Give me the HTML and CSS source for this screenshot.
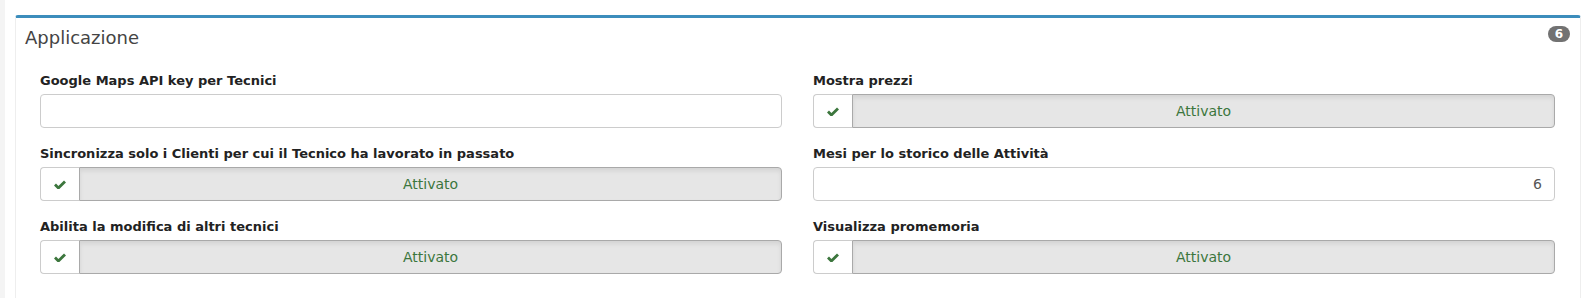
FILE: index.html
```html
<!DOCTYPE html>
<html lang="it">
<head>
    <meta charset="UTF-8">
    <meta name="viewport" content="width=device-width, initial-scale=1.0">
    <title>Impostazioni - Applicazione</title>
    <link rel="stylesheet" href="styles.css">
</head>
<body>

<!-- === Sezione impostazioni === -->
<div class="content-wrapper">
    <div class="box">
        <div class="box-header">
            <h3 class="box-title">Applicazione</h3>
            <span class="badge">6</span>
        </div>

        <div class="box-body">
            <div class="settings-grid">

                <div class="form-group">
                    <label for="mapsKey">Google Maps API key per Tecnici</label>
                    <input type="text" id="mapsKey" class="form-control">
                </div>

                <div class="form-group">
                    <label>Mostra prezzi</label>
                    <div class="toggle">
                        <span class="toggle-addon">
                            <svg class="check" viewBox="0 0 12 9" width="12" height="9"><path d="M1 4.6 L4.4 8 L11 1.4" fill="none" stroke="currentColor" stroke-width="2.8"/></svg>
                        </span>
                        <span class="toggle-state">Attivato</span>
                    </div>
                </div>

                <div class="form-group">
                    <label>Sincronizza solo i Clienti per cui il Tecnico ha lavorato in passato</label>
                    <div class="toggle">
                        <span class="toggle-addon">
                            <svg class="check" viewBox="0 0 12 9" width="12" height="9"><path d="M1 4.6 L4.4 8 L11 1.4" fill="none" stroke="currentColor" stroke-width="2.8"/></svg>
                        </span>
                        <span class="toggle-state">Attivato</span>
                    </div>
                </div>

                <div class="form-group">
                    <label for="mesiStorico">Mesi per lo storico delle Attività</label>
                    <input type="text" id="mesiStorico" class="form-control number" value="6">
                </div>

                <div class="form-group">
                    <label>Abilita la modifica di altri tecnici</label>
                    <div class="toggle">
                        <span class="toggle-addon">
                            <svg class="check" viewBox="0 0 12 9" width="12" height="9"><path d="M1 4.6 L4.4 8 L11 1.4" fill="none" stroke="currentColor" stroke-width="2.8"/></svg>
                        </span>
                        <span class="toggle-state">Attivato</span>
                    </div>
                </div>

                <div class="form-group">
                    <label>Visualizza promemoria</label>
                    <div class="toggle">
                        <span class="toggle-addon">
                            <svg class="check" viewBox="0 0 12 9" width="12" height="9"><path d="M1 4.6 L4.4 8 L11 1.4" fill="none" stroke="currentColor" stroke-width="2.8"/></svg>
                        </span>
                        <span class="toggle-state">Attivato</span>
                    </div>
                </div>

            </div>
        </div>
    </div>
</div>

</body>
</html>
```

FILE: styles.css
```css
/* === Page === */
body {
    margin: 0;
    font-family: "DejaVu Sans", Verdana, sans-serif;
    font-size: 14px;
    color: #333;
    background-color: #fff;
}

.content-wrapper {
    border-left: 5px solid #f4f4f4;
    padding: 15px 10px 0 10px;
}

/* === Box === */
.box {
    background-color: #fff;
    border: 1px solid #eee;
    border-top: 3px solid #3c8dbc;
    border-radius: 3px;
    min-height: 300px;
}

.box-header {
    display: flex;
    justify-content: space-between;
    align-items: flex-start;
    padding: 9px 10px 10px 9px;
}

.box-title {
    margin: 0;
    font-size: 18px;
    font-weight: normal;
    line-height: 21px;
    color: #444;
}

.badge {
    margin-top: -1px;
    background-color: #727272;
    color: #fff;
    font-size: 12px;
    font-weight: bold;
    line-height: 16px;
    padding: 0 7px;
    border-radius: 8px;
}

.box-body {
    padding: 13px 25px 0 24px;
}

/* === Form === */
.settings-grid {
    display: grid;
    grid-template-columns: 1fr 1fr;
    column-gap: 31px;
}

.form-group {
    margin-bottom: 16px;
}

.form-group label {
    display: block;
    font-size: 13px;
    font-weight: bold;
    line-height: 19px;
    color: #222;
    margin-bottom: 4px;
}

.form-control {
    display: block;
    box-sizing: border-box;
    width: 100%;
    height: 34px;
    padding: 6px 12px;
    border: 1px solid #ccc;
    border-radius: 4px;
    font-family: inherit;
    font-size: 14px;
    color: #555;
    background-color: #fff;
}

.form-control.number {
    text-align: right;
}

/* === Toggle (Attivato) === */
.toggle {
    display: flex;
    height: 34px;
    box-sizing: border-box;
}

.toggle-addon {
    display: flex;
    align-items: center;
    justify-content: center;
    width: 38px;
    border: 1px solid #ccc;
    border-right: none;
    border-radius: 4px 0 0 4px;
    background-color: #fff;
}

.check {
    color: #3c763d;
}

.toggle-state {
    flex: 1;
    display: flex;
    align-items: center;
    justify-content: center;
    border: 1px solid #a9a9a9;
    border-radius: 0 4px 4px 0;
    background-color: #e6e6e6;
    box-shadow: inset 0 3px 4px rgba(0, 0, 0, 0.08);
    color: #3c763d;
    font-size: 14px;
}
```
